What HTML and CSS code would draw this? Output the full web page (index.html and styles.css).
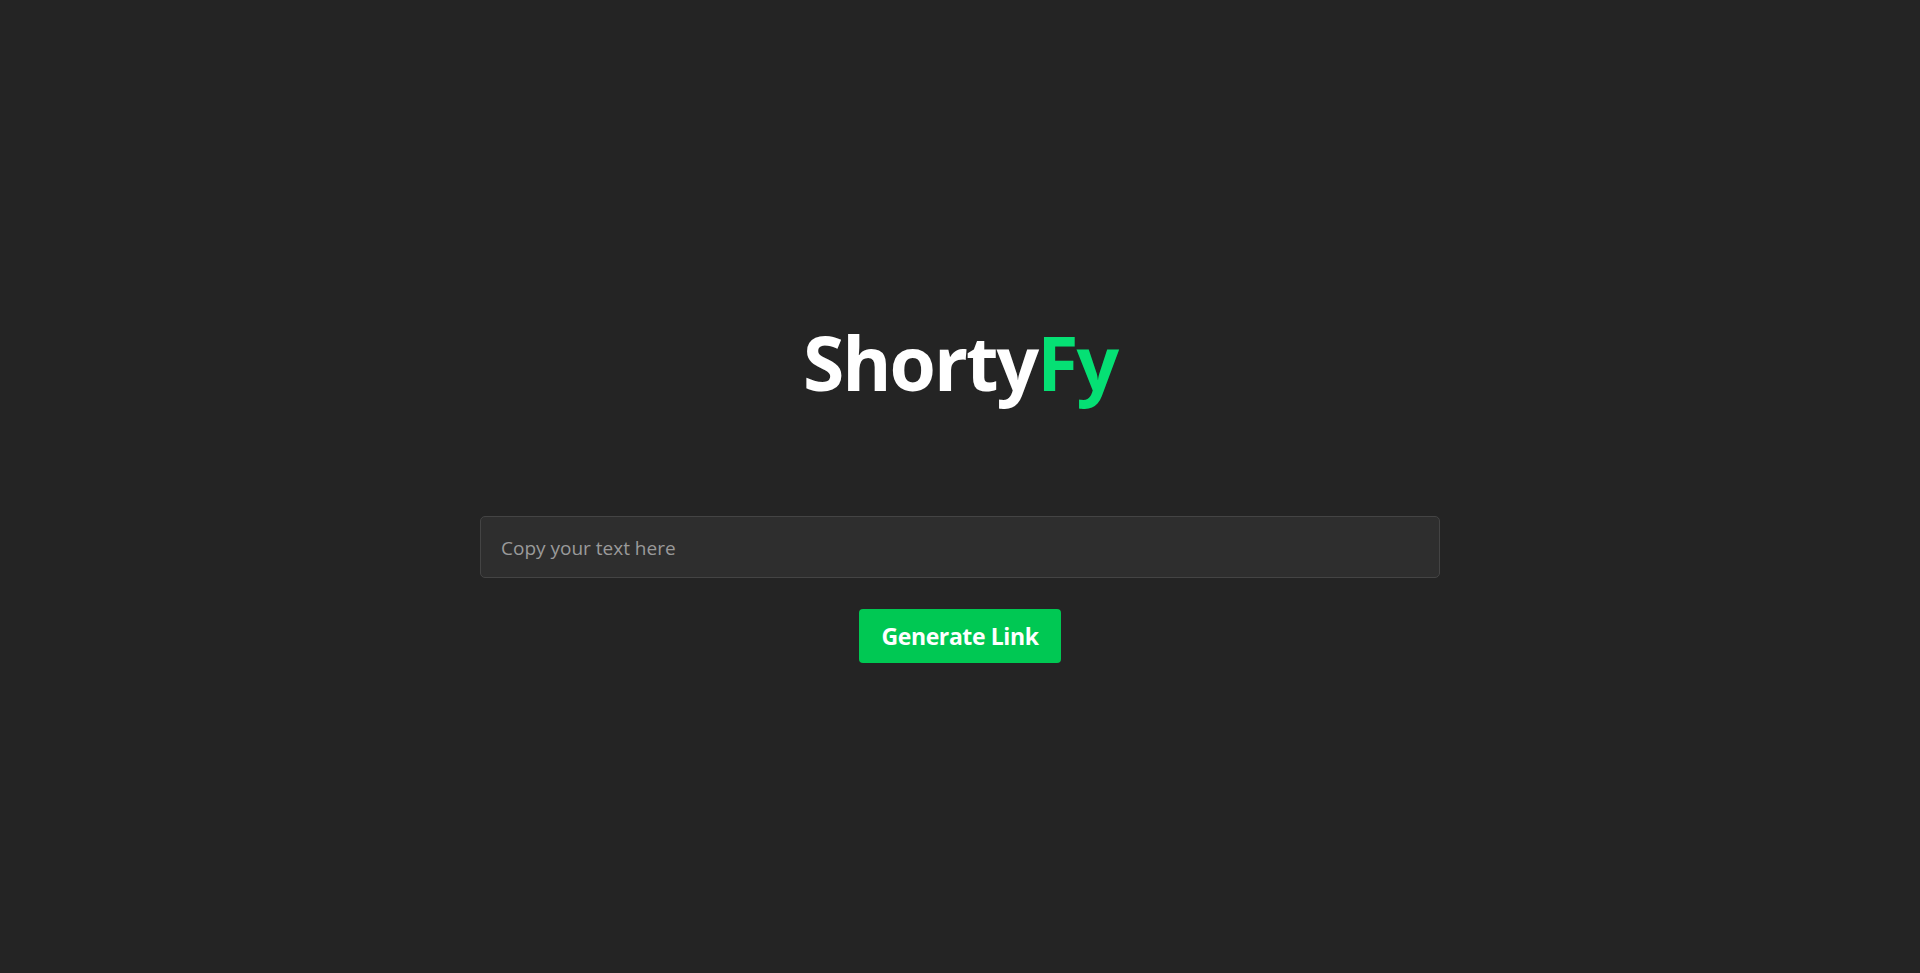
FILE: index.html
```html
<!DOCTYPE html>
<html lang="en">
<head>
<meta charset="utf-8">
<title>ShortyFy</title>
<link rel="stylesheet" href="styles.css">
</head>
<body>
<main class="page">
  <h1 class="logo">Shorty<span class="logo-accent">Fy</span></h1>
  <form class="shorten-form">
    <input class="text-input" type="text" placeholder="Copy your text here">
    <button class="generate-btn" type="button">Generate Link</button>
  </form>
</main>
</body>
</html>
```
FILE: styles.css
```css
html, body {
  margin: 0;
  padding: 0;
  background: #242424;
  height: 100%;
}
body {
  font-family: "Open Sans", "Noto Sans", sans-serif;
  color: #fff;
}
.page {
  display: flex;
  flex-direction: column;
  align-items: center;
  padding-top: 320px;
}
.logo {
  margin: 0;
  font-size: 75px;
  line-height: 84px;
  font-weight: 700;
  color: #fff;
  letter-spacing: -2px;
}
.logo-accent {
  color: #05e074;
}
.shorten-form {
  margin-top: 112px;
  display: flex;
  flex-direction: column;
  align-items: center;
  gap: 31px;
}
.text-input {
  box-sizing: border-box;
  width: 960px;
  height: 62px;
  padding: 2px 20px 0;
  background: #2e2e2e;
  border: 1px solid #444;
  border-radius: 5px;
  color: #ddd;
  font-family: inherit;
  font-size: 19px;
  outline: none;
}
.text-input::placeholder {
  color: #9a9a9a;
}
.generate-btn {
  box-sizing: border-box;
  width: 202px;
  height: 54px;
  padding: 0;
  white-space: nowrap;
  background: #00c853;
  border: none;
  border-radius: 4px;
  color: #fff;
  font-family: inherit;
  font-size: 23px;
  font-weight: 700;
  letter-spacing: -0.4px;
  cursor: pointer;
}
```
